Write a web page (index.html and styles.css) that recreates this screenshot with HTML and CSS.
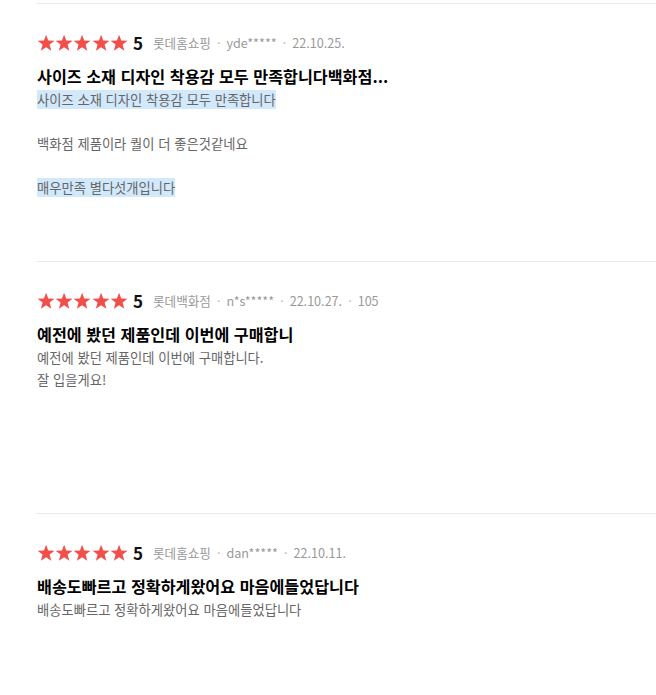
FILE: index.html
```html
<!DOCTYPE html>
<html lang="ko">
<head>
<meta charset="utf-8">
<link rel="stylesheet" href="styles.css">
</head>
<body>
<svg width="0" height="0" class="defs">
  <defs>
    <symbol id="star" viewBox="0 0 20 20">
      <polygon points="10,0.8 12.4,7.3 19.4,7.5 13.9,11.8 15.8,18.6 10,14.7 4.2,18.6 6.1,11.8 0.6,7.5 7.6,7.3"/>
    </symbol>
  </defs>
</svg>
<div class="list">
  <div class="review r1">
    <div class="head">
      <span class="stars"><svg><use href="#star"/></svg><svg><use href="#star"/></svg><svg><use href="#star"/></svg><svg><use href="#star"/></svg><svg><use href="#star"/></svg></span><span class="score">5</span>
      <span class="meta">롯데홈쇼핑<span class="dot">·</span>yde*****<span class="dot">·</span>22.10.25.</span>
    </div>
    <div class="title">사이즈 소재 디자인 착용감 모두 만족합니다백화점...</div>
    <div class="body">
      <p><span class="hl">사이즈 소재 디자인 착용감 모두 만족합니다</span></p>
      <p>&nbsp;</p>
      <p>백화점 제품이라 퀄이 더 좋은것같네요</p>
      <p>&nbsp;</p>
      <p><span class="hl">매우만족 별다섯개입니다</span></p>
    </div>
  </div>
  <div class="review">
    <div class="head">
      <span class="stars"><svg><use href="#star"/></svg><svg><use href="#star"/></svg><svg><use href="#star"/></svg><svg><use href="#star"/></svg><svg><use href="#star"/></svg></span><span class="score">5</span>
      <span class="meta">롯데백화점<span class="dot">·</span>n*s*****<span class="dot">·</span>22.10.27.<span class="dot">·</span>105</span>
    </div>
    <div class="title">예전에 봤던 제품인데 이번에 구매합니</div>
    <div class="body">
      <p>예전에 봤던 제품인데 이번에 구매합니다.</p>
      <p>잘 입을게요!</p>
    </div>
  </div>
  <div class="review">
    <div class="head">
      <span class="stars"><svg><use href="#star"/></svg><svg><use href="#star"/></svg><svg><use href="#star"/></svg><svg><use href="#star"/></svg><svg><use href="#star"/></svg></span><span class="score">5</span>
      <span class="meta">롯데홈쇼핑<span class="dot">·</span>dan*****<span class="dot">·</span>22.10.11.</span>
    </div>
    <div class="title">배송도빠르고 정확하게왔어요 마음에들었답니다</div>
    <div class="body">
      <p>배송도빠르고 정확하게왔어요 마음에들었답니다</p>
    </div>
  </div>
</div>
</body>
</html>
```
FILE: styles.css
```css
html, body {
  margin: 0;
  padding: 0;
  background: #fff;
}
body {
  font-family: "Noto Sans CJK KR", "Noto Sans", sans-serif;
  color: #111;
}
.defs {
  position: absolute;
  width: 0;
  height: 0;
}
.list {
  padding: 3px 0 0 36px;
}
.review {
  border-top: 1px solid #ebebeb;
  padding: 29px 0 0 1px;
  height: 252px;
  box-sizing: border-box;
  overflow: hidden;
}
.review.r1 {
  height: 258px;
}
.head {
  display: flex;
  align-items: center;
  height: 20px;
}
.stars {
  display: flex;
  gap: 0;
  fill: #f24f4b;
}
.stars svg {
  width: 18.2px;
  height: 18px;
  display: block;
}
.score {
  font-size: 17px;
  font-weight: 700;
  margin-left: 5px;
  color: #111;
  line-height: 20px;
}
.meta {
  margin-left: 10px;
  font-size: 12.6px;
  color: #999;
  line-height: 20px;
}
.dot {
  margin: 0 6px;
  color: #bbb;
}
.title {
  margin-top: 12px;
  font-size: 16.2px;
  font-weight: 700;
  line-height: 22px;
  color: #000;
}
.body {
  margin-top: 2px;
  font-size: 13.3px;
  color: #666;
  line-height: 22px;
}
.body p {
  margin: 0;
}
.hl {
  background: #d2e8fb;
}
```
